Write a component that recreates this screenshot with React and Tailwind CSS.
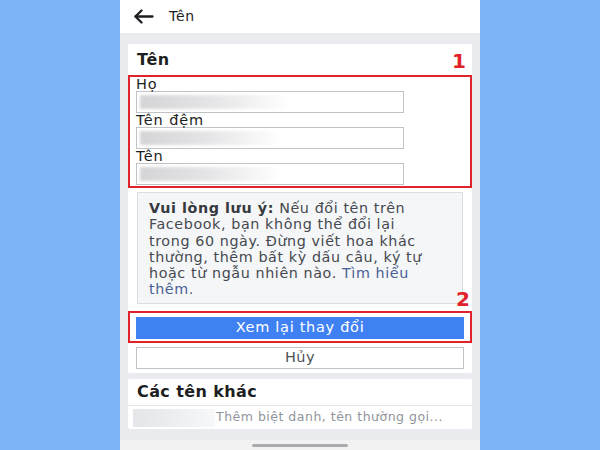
import React from 'react';

const font = { fontFamily: '"DejaVu Sans", Roboto, sans-serif' };

const BlurField = ({ w = 150 }) => (
  <div className="h-[22px] w-[268px] border border-[#bfc3c8] bg-white flex items-center px-[3px] overflow-hidden">
    <div
      className="h-[14px] bg-linear-to-r from-[#d4d4d6] via-[#e6e6e8] to-white blur-[1.5px]"
      style={{ width: w }}
    />
  </div>
);

const BackArrow = () => (
  <svg width="21" height="15" viewBox="0 0 21 15" fill="none" stroke="#1c1e21" strokeWidth="2.3" strokeLinecap="round" strokeLinejoin="round">
    <path d="M19.5 7.5H2.5" />
    <path d="M8.5 1.5L2.5 7.5L8.5 13.5" />
  </svg>
);

export default function App() {
  return (
    <div className="w-[600px] h-[450px] bg-[#7db4f6] flex justify-center overflow-hidden" style={font}>
      <div className="relative w-[360px] h-full bg-[#e9ebee] flex flex-col">
        <header className="h-[33px] bg-white flex items-center pl-[13px] shrink-0">
          <BackArrow />
          <span className="ml-[15px] text-[14px] tracking-[0.5px] text-[#1c1e21]">Tên</span>
        </header>

        <div className="flex-1 px-[8px] pt-[11px]">
          <div className="bg-white rounded-[2px] pb-[4px]">
            <div className="h-[31px] flex items-center justify-between pl-[9px] pr-[6px]">
              <span className="text-[16px] tracking-[0.3px] font-bold text-[#1c1e21]">Tên</span>
              <span className="text-[20px] font-bold text-[#e0232b] leading-none mt-[3px]">1</span>
            </div>

            <div className="border-2 border-[#e0232b] px-[6px] pb-px text-[14.5px] tracking-[0.9px] text-[#1c1e21]">
              <p className="leading-[14px] h-[14px]">Họ</p>
              <BlurField w={150} />
              <p className="leading-[14px] h-[14px]">Tên đệm</p>
              <BlurField w={140} />
              <p className="leading-[14px] h-[14px]">Tên</p>
              <BlurField w={140} />
            </div>

            <div className="mt-[4px] mx-[9px] h-[112px] bg-[#f5f6f7] border border-[#dadde1] pl-[11px] pt-[7px] text-[14.3px] tracking-[0.6px] leading-[16.3px] text-[#464a50] whitespace-nowrap overflow-hidden">
              <span className="font-bold text-[#36393e]">Vui lòng lưu ý:</span> Nếu đổi tên trên<br />
              Facebook, bạn không thể đổi lại<br />
              trong 60 ngày. Đừng viết hoa khác<br />
              thường, thêm bất kỳ dấu câu, ký tự<br />
              hoặc từ ngẫu nhiên nào. <span className="text-[#4a5f94]">Tìm hiểu</span><br />
              <span className="text-[#4a5f94]">thêm.</span>
            </div>

            <div className="mt-[7px] border-2 border-[#e0232b] px-[6px] pt-[4px] pb-[2px]">
              <div className="h-[22px] bg-[#3f81f2] flex items-center justify-center text-white text-[14.5px] tracking-[0.7px]">
                Xem lại thay đổi
              </div>
            </div>

            <div className="mt-[4px] mx-[8px] h-[22px] border border-[#bec3c9] bg-white flex items-center justify-center text-[14.5px] tracking-[0.5px] text-[#4b4f56]">
              Hủy
            </div>
          </div>

          <div className="mt-[6px] bg-white rounded-[2px]">
            <div className="h-[27px] flex items-center pl-[9px] border-b border-[#e5e6e8]">
              <span className="text-[16px] tracking-[0.4px] font-bold text-[#1c1e21]">Các tên khác</span>
            </div>
            <div className="h-[23px] flex items-center pl-[5px]">
              <div className="w-[82px] h-[18px] bg-linear-to-r from-[#e4e6ea] via-[#eceef1] to-[#f7f8f9] blur-[0.5px]" />
              <span className="ml-[1px] text-[12.5px] tracking-[0.5px] text-[#90949c]">Thêm biệt danh, tên thường gọi...</span>
            </div>
          </div>
        </div>

        <div className="h-[10px] bg-[#f2f2f3] flex items-center justify-center shrink-0">
          <div className="w-[96px] h-[3px] rounded-full bg-[#a9abae]" />
        </div>

        <span className="absolute left-[336px] top-[289px] text-[20px] font-bold text-[#e0232b] leading-none">2</span>
      </div>
    </div>
  );
}
